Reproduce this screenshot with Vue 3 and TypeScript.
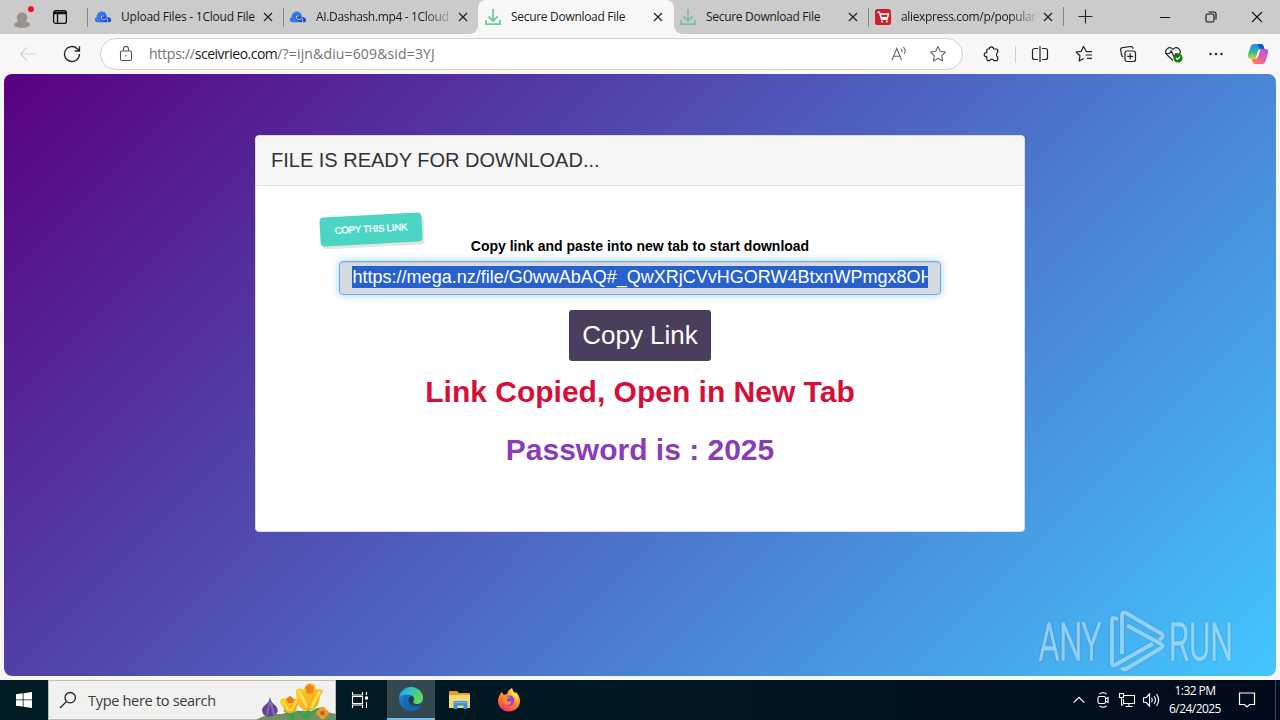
<script setup lang="ts">
interface Tab {
  title: string
  icon: 'cloud' | 'download' | 'cart'
  active?: boolean
  faded?: boolean
  separator?: boolean
  fit: string
}

const tabs: Tab[] = [
  { title: 'Upload Files - 1Cloud File', icon: 'cloud', separator: true, fit: 'fit-a' },
  { title: 'AI.Dashash.mp4 - 1Cloud', icon: 'cloud', faded: true, separator: true, fit: 'fit-b' },
  { title: 'Secure Download File', icon: 'download', active: true, fit: 'fit-c' },
  { title: 'Secure Download File', icon: 'download', fit: 'fit-c' },
  { title: 'aliexpress.com/p/popular', icon: 'cart', faded: true, separator: true, fit: 'fit-d' },
]

const link = 'https://mega.nz/file/G0wwAbAQ#_QwXRjCVvHGORW4BtxnWPmgx8OH'
</script>

<template>
  <div class="screen">
    <header class="titlebar">
      <div class="profile">
        <svg width="24" height="28" viewBox="0 0 24 28">
          <circle cx="12" cy="14" r="11" fill="#cecbc9" />
          <circle cx="12" cy="13.500" r="5.3" fill="#97928f" />
          <ellipse cx="12" cy="20.500" rx="8" ry="3.600" fill="#97928f" />
          <circle cx="21" cy="5.2" r="3.6" fill="#e0142c" stroke="#e4d4d4" stroke-width="1" />
        </svg>
      </div>
      <div class="workspaces">
        <svg width="16" height="16" viewBox="0 0 16 16" fill="none" stroke="#111" stroke-width="1.3">
          <rect x="1.6" y="1.6" width="12.8" height="12.8" rx="2.2" />
          <path d="M2 3.2h12M2 4.5h12M5.5 5v9" />
        </svg>
      </div>
      <div v-for="(tab, i) in tabs" :key="i" class="tab" :class="{ active: tab.active, separated: tab.separator }">
        <svg v-if="tab.icon === 'cloud'" class="favicon cloud" viewBox="0 0 18 18">
          <path d="M2.400 14C.2 12.700.4 9.800 2.600 9.300 2.500 5.800 5 3.300 8.200 3.500c3.300.2 5 3 4.500 5.500l-1 5z" fill="#3478ee" />
          <path d="M2.400 14.200C5 14.500 9 14.500 11.500 14.200 8.500 13.600 6 11.500 6.300 8.800 6.600 6.500 9.600 6 10.300 8l2.500 1c2.200-.4 4.400 1.200 4.400 3.300 0 1.300-.7 2-1.900 2z" fill="#1c50c5" />
          <path d="M9.800 8.200C8.300 7 6.500 8.500 7.300 10.200c.9 1.900 4 1.800 5 0" fill="none" stroke="#d3dcf0" stroke-width="1" />
          <path d="M12.700 9.500c1.200 1.500 1.300 3.300.7 4.800" fill="none" stroke="#cbd3e6" stroke-width=".8" />
        </svg>
        <svg v-else-if="tab.icon === 'download'" class="favicon" viewBox="0 0 18 18" fill="none" stroke="#74c79c" stroke-width="1.800">
          <path d="M9 1v12M4.500 8.500 9 13l4.500-4.500M2 12v4.200h14V12" />
        </svg>
        <svg v-else class="favicon" viewBox="0 0 18 18">
          <rect x="1" y="1" width="16" height="16" rx="2.500" fill="#cd1f2c" />
          <path d="M3.500 4.200h2l2 7h6.300M6 6h8.600l-1.200 3.700H7.100" fill="none" stroke="#fff" stroke-width="1.400" />
          <circle cx="8" cy="13.500" r="1" fill="#fff" /><circle cx="12.800" cy="13.500" r="1" fill="#fff" />
        </svg>
        <span class="tab-title" :class="[tab.fit, { faded: tab.faded }]">{{ tab.title }}</span>
        <svg class="close" width="10" height="10" viewBox="0 0 10 10" stroke="#222" stroke-width="1.200"><path d="m1 1 8 8M9 1 1 9" /></svg>
      </div>
      <div class="new-tab">
        <svg width="15" height="15" viewBox="0 0 15 15" stroke="#222" stroke-width="1.100"><path d="M.5 7.500h14M7.500.5v14" /></svg>
      </div>
      <div class="window-controls">
        <div><svg width="12" height="12" viewBox="0 0 12 12" stroke="#111"><path d="M1 6.500h10" /></svg></div>
        <div>
          <svg width="12" height="12" viewBox="0 0 12 12" fill="none" stroke="#111" stroke-width="1.100">
            <rect x="1" y="3" width="8" height="8" rx="1.500" /><path d="M3.500 1H9a2 2 0 0 1 2 2v5.500" />
          </svg>
        </div>
        <div><svg width="12" height="12" viewBox="0 0 12 12" stroke="#111" stroke-width="1.100"><path d="m1 1 10 10M11 1 1 11" /></svg></div>
      </div>
    </header>

    <nav class="toolbar">
      <div class="tool"><svg width="18" height="16" viewBox="0 0 18 16" fill="none" stroke="#cfcfcf" stroke-width="1.100"><path d="M17 8H1.500M8 1.500 1.500 8 8 14.500" /></svg></div>
      <div class="tool"><svg width="18" height="18" viewBox="0 0 18 18" fill="none" stroke="#222" stroke-width="1.300"><path d="M16.500 9a7.500 7.500 0 1 1-2.200-5.300L16.300 5.700M16.500 1.200V6h-4.800" /></svg></div>
      <div class="address">
        <svg class="lock" width="14" height="16" viewBox="0 0 14 16" fill="none" stroke="#555" stroke-width="1.100">
          <rect x="1.500" y="5" width="11" height="9.500" rx="1.500" /><path d="M4.500 5V2.900a2.500 2.500 0 0 1 5 0V5" /><circle cx="7" cy="9.700" r=".8" fill="#555" stroke="none" />
        </svg>
        <span class="url"><span class="scheme">https://</span><b>sceivrieo.com</b>/?=ijn&amp;diu=609&amp;sid=3YJ</span>
        <svg class="read-aloud" width="18" height="18" viewBox="0 0 18 18" fill="none" stroke="#666" stroke-width="1.100">
          <path d="m2 15 4.800-11.500L11.500 15M3.600 11.200h6.300M11 4c.9.800 1.200 2 .9 3.300M13.300 2.200c2 1.700 2.300 4.300 1 6.500" />
        </svg>
        <svg class="star" width="18" height="18" viewBox="0 0 18 18" fill="none" stroke="#666" stroke-width="1.100" stroke-linejoin="round">
          <path d="m9 1.500 2.300 4.800 5.200.7-3.800 3.700.9 5.200L9 13.400l-4.600 2.500.9-5.200L1.500 7l5.200-.7z" />
        </svg>
      </div>
      <div class="tool extensions"><svg width="18" height="18" viewBox="0 0 18 18" fill="none" stroke="#222" stroke-width="1.200" stroke-linejoin="round"><path d="M6.200 4a2.200 2.200 0 0 1 4.400 0h2.900a1.200 1.200 0 0 1 1.200 1.200v2.600a2.200 2.200 0 0 0 0 4v2.600a1.200 1.200 0 0 1-1.200 1.200h-2.700a2.200 2.200 0 0 0-4.200 0H5a1.200 1.200 0 0 1-1.200-1.200v-2.700a2.100 2.100 0 1 1 0-4.100V5.200A1.200 1.200 0 0 1 5 4z" /></svg></div>
      <i class="divider"></i>
      <div class="tool"><svg width="18" height="18" viewBox="0 0 18 18" fill="none" stroke="#222" stroke-width="1.200"><path d="M7 3.500H3.500a2 2 0 0 0-2 2v7a2 2 0 0 0 2 2H7M11 3.500h3.500a2 2 0 0 1 2 2v7a2 2 0 0 1-2 2H11M9 1v16" /></svg></div>
      <div class="tool"><svg width="18" height="18" viewBox="0 0 18 18" fill="none" stroke="#222" stroke-width="1.200" stroke-linejoin="round"><path d="M17 6.700h-5.500L8.500 1.500 6.300 6.300l-5.200.7L5 10.700l-.9 5.200 4.600-2.400M10.500 10H17M12 13.300h5" /></svg></div>
      <div class="tool"><svg width="18" height="18" viewBox="0 0 18 18" fill="none" stroke="#222" stroke-width="1.200"><rect x="6" y="6" width="10.500" height="10.500" rx="2" /><path d="M11.200 8.300v6M8.200 11.300h6M14 3.700A2 2 0 0 0 12 1.500L3.500 2.600A2 2 0 0 0 1.600 5l1 5.200a2 2 0 0 0 1.700 1.600" /></svg></div>
      <div class="tool health"><svg width="20" height="18" viewBox="0 0 20 18" fill="none" stroke="#222" stroke-width="1.200"><path d="M9 15.700 2.800 9.500C-.5 5.500 5 .3 9 4.300c4-4 9.500 1.200 6.200 5.200M1 8.500h4.500L7.200 6l3 6 1.700-3.300h1.600" /><circle cx="14" cy="13" r="4.600" fill="#157c18" stroke="none" /><path d="m11.900 13 1.500 1.500 2.800-2.800" stroke="#fff" /></svg></div>
      <div class="tool"><svg width="16" height="4" viewBox="0 0 16 4" fill="#222"><circle cx="2.500" cy="2" r="1.200" /><circle cx="8" cy="2" r="1.200" /><circle cx="13.500" cy="2" r="1.200" /></svg></div>
      <div class="tool copilot">
        <svg width="22" height="22" viewBox="0 0 22 22">
          <defs>
            <linearGradient id="cp1" x1="0" y1="0" x2="0" y2="1"><stop offset="0" stop-color="#1d8df0" /><stop offset=".55" stop-color="#37b89a" /><stop offset="1" stop-color="#e6d32f" /></linearGradient>
            <linearGradient id="cp2" x1="1" y1="0" x2="0" y2="1"><stop offset="0" stop-color="#a65bed" /><stop offset=".5" stop-color="#e85aa4" /><stop offset="1" stop-color="#ff8b50" /></linearGradient>
          </defs>
          <path d="M7 1h7c1.500 0 2.200.8 2.700 2.500L17.400 6H14c-1.600 0-2.500.8-3 2.400L9.300 14c-.5 1.500-1 2-2.500 2H4c-2.800 0-3.700-2-3-4.500L3.500 4C4.200 2 5 1 7 1z" fill="url(#cp1)" />
          <path d="M10 1h4c1.500 0 2.200.8 2.700 2.500L17.400 6H14c-1.300 0-2-1-2.300-2C11.300 2.400 11 1.500 10 1z" fill="#1558cc" />
          <path d="M15 21H8c-1.500 0-2.200-.8-2.700-2.500L4.600 16H8c1.600 0 2.500-.8 3-2.400L12.700 8c.5-1.500 1-2 2.500-2H18c2.800 0 3.700 2 3 4.500L18.500 18c-.7 2-1.500 3-3.500 3z" fill="url(#cp2)" />
          <path d="M11.200 7.500h1.700l-2 6.500H9.200z" fill="#f7f7f7" />
        </svg>
      </div>
    </nav>

    <main class="page">
      <section class="card">
        <h1>FILE IS READY FOR DOWNLOAD...</h1>
        <div class="card-body">
          <span class="badge">COPY THIS LINK</span>
          <label>Copy link and paste into new tab to start download</label>
          <div class="link-field"><span>{{ link }}</span></div>
          <button type="button">Copy Link</button>
          <h2 class="copied">Link Copied, Open in New Tab</h2>
          <h2 class="password">Password is : 2025</h2>
        </div>
      </section>
      <svg class="watermark" width="208" height="66" viewBox="0 0 208 66">
        <g fill="#d5efff" stroke="#d5efff" stroke-width="1.500">
          <text x="7" y="51.500" textLength="62" lengthAdjust="spacingAndGlyphs">ANY</text>
          <text x="137" y="51.500" textLength="64" lengthAdjust="spacingAndGlyphs">RUN</text>
        </g>
        <g fill="none" stroke="#d5efff" stroke-width="3.800" stroke-linejoin="round" stroke-linecap="butt">
          <path d="M86 11.500 83 10.300q-3-1.200-3 2V55q0 3.500 3 2l38-21.500" />
          <path d="M90 46V7.500q0-4.500 4-2.500l35 20.500q3 2 1 4.500l-3 2" />
          <path d="M95 17.500 129 36q3 2 0 4L94 61q-3 1.300-4-1.500" />
        </g>
      </svg>
    </main>

    <footer class="taskbar">
      <div class="start"><svg width="16" height="16" viewBox="0 0 16 16" fill="#fff"><path d="M0 2.300 6.700 1.300v6.200H0zM7.500 1.200 16 0v7.500H7.500zM0 8.300h6.700v6.300L0 13.700zM7.500 8.300H16V16l-8.500-1.300z" /></svg></div>
      <div class="search">
        <svg width="18" height="18" viewBox="0 0 18 18" fill="none" stroke="#222" stroke-width="1.300"><circle cx="11.200" cy="6.700" r="5.200" /><path d="M7.500 10.500 1 17" /></svg>
        <span>Type here to search</span>
        <svg class="flowers" width="80" height="39" viewBox="0 0 80 39">
          <defs>
            <linearGradient id="petal" x1="0" y1="0" x2="1" y2="1"><stop offset="0" stop-color="#ffd12e" /><stop offset="1" stop-color="#f3a112" /></linearGradient>
          </defs>
          <path d="M0 39q10-7 26-6 12-4 27-3 16 0 27 3v6z" fill="#6d9160" />
          <path d="M37 39q1-7-1-13m1 12q-6-8-9-9M49 38q5-10 4-16m-3 15q-7-7-9-6m9 6q7-8 14-9" fill="none" stroke="#38a24b" stroke-width="2.800" />
          <path d="M14 16q1 6 6 9 4 5-1 9-6 3-11 0-4-5 0-9 5-3 6-9z" fill="#65449b" />
          <path d="m14 20-3 14m4-12 3 12" stroke="#8d6db5" stroke-width="1.500" fill="none" />
          <path d="M24 19q4-3 6-1l4-3 4 3q4-1 5 2 0 4-2 6-1 6-6 6-6 1-8-6-3-3-3-7z" fill="url(#petal)" />
          <path d="m27 20 6 10M41 19l-6 11" stroke="#ffda4e" stroke-width="2.400" />
          <path d="m30 18 4-3 4 3-1 4h-5z" fill="#e77a1c" />
          <path d="M40 9q4-3 7 0l4-6q5-2 8 1l1 5q4-2 7 1l-3 5q-1 12-8 14-8 2-12-3-4-5-4-17z" fill="url(#petal)" />
          <path d="m43 10 8 16M64 10l-9 17" stroke="#ffdf54" stroke-width="3" />
          <path d="m49 6 4-3 5 3-1 6-6 1z" fill="#ed8419" />
          <g fill="#f59a2a"><circle cx="63.500" cy="32" r="3.200" /><circle cx="69.500" cy="32" r="3.200" /><circle cx="66.500" cy="29" r="3.200" /><circle cx="66.500" cy="35" r="3.200" /></g><circle cx="66.500" cy="32" r="2.300" fill="#b95b20" />
        </svg>
      </div>
      <div class="task view"><svg width="18" height="18" viewBox="0 0 18 18" fill="none" stroke="#fff" stroke-width="1.100"><path d="M1.500 1v3h10V1M1.500 17v-3h10v3M15.500 1v3M15.500 11v6" /><rect x="1.500" y="5.500" width="10" height="7" /><rect x="14" y="5.500" width="3" height="3" fill="#fff" stroke="none" /></svg></div>
      <div class="task running">
        <svg width="26" height="26" viewBox="0 0 26 26">
          <defs>
            <linearGradient id="eg1" x1="0" y1="0" x2="1" y2=".4"><stop offset="0" stop-color="#2699d8" /><stop offset=".5" stop-color="#35c1c0" /><stop offset="1" stop-color="#65d653" /></linearGradient>
            <linearGradient id="eg2" x1="0" y1="0" x2="1" y2="1"><stop offset="0" stop-color="#198edb" /><stop offset="1" stop-color="#124c98" /></linearGradient>
          </defs>
          <circle cx="13" cy="13" r="12" fill="url(#eg2)" />
          <path d="M1 12C2 5 7 1 13 1c7 0 12 5 12 11 0 4-3 6-6.500 6-3 0-4-1.300-3.300-2.500 2.300-4-1.200-7.200-5.400-6.600C5.500 8.500 2 10 1 12z" fill="url(#eg1)" />
          <path d="M10 9c-4 5-1 12 7 12 3 0 4.500-.7 6-1.800C20 25 14 26 10 24 4 20 4 11 10 9z" fill="#1767b4" />
          <path d="M12.500 10.200c-3.500 2.500-2.500 8 2.500 9.300 3.600 1 6.800-.5 8.800-2-2.500 1.200-8.600 1-8.600-1.500 0-1 1.200-1.600.8-3.600-.3-1.500-1.600-2.800-3.500-2.200z" fill="#293e48" />
        </svg>
      </div>
      <div class="task">
        <svg width="24" height="22" viewBox="0 0 24 22"><path d="M1 3q0-1 1-1h7l2 2h10q1 0 1 1v3H1z" fill="#e2a02d" /><path d="M1 6h21v13H1z" fill="#f8d775" /><path d="M5.500 20v-7q0-1 1-1h12q1 0 1 1v7h-4v-3.500h-6V20z" fill="#3b93d4" /><path d="M6 13.500h13" stroke="#75bce8" /></svg>
      </div>
      <div class="task">
        <svg width="24" height="24" viewBox="0 0 24 24">
          <defs><linearGradient id="ff" x1=".8" y1="0" x2=".3" y2="1"><stop offset="0" stop-color="#ffe64b" /><stop offset=".45" stop-color="#ff9826" /><stop offset="1" stop-color="#f52d64" /></linearGradient></defs>
          <path d="M4.500 4 7 7l3-1q1-4 5-6 0 3 3 5l1-1q4 4 4 9c0 6-5 10.500-11 10.500S1 19 1 13c0-3 1-5 2-6.500z" fill="url(#ff)" />
          <circle cx="12" cy="12.500" r="5.300" fill="#8d45de" />
          <path d="M5 9q3-2 6-.5l2 1.500q-3 0-3.500 2.200Q11 15 15 13q-2 5-6.500 3.500Q4.500 14.500 5 9z" fill="#ff8a2a" />
          <path d="M15 0q0 3 3 5 4 4 2 10 0-5-4-7-3-3-1-8z" fill="#ffe04a" />
        </svg>
      </div>
      <div class="tray">
        <svg class="chevron" width="12" height="8" viewBox="0 0 12 8" fill="none" stroke="#fff" stroke-width="1.200"><path d="m.7 6.700 5.300-5.300 5.300 5.300" /></svg>
        <svg class="meet" width="14" height="18" viewBox="0 0 14 18" fill="none" stroke="#fff" stroke-width="1.100"><rect x="2" y="5.500" width="7.500" height="7" rx="1.500" /><path d="M9.500 8 12 6.500v5L9.500 10M3.500 3q3.500-2.500 7 0M3.500 15q3.500 2.500 7 0" /></svg>
        <svg class="network" width="18" height="16" viewBox="0 0 18 16" fill="none" stroke="#fff" stroke-width="1.100"><path d="M6 3.500h10.500v8H5.500V7M11 11.500v3M7.500 14.500h7" /><path d="M1.500 1.500h4v4h-4zM3.500 5.500v7.500h2" /></svg>
        <svg class="volume" width="18" height="16" viewBox="0 0 18 16" fill="none" stroke="#fff" stroke-width="1.100"><path d="M1.500 5.700H4L7.500 2v12L4 10.300H1.500zM9.500 5.700q1.500 2.300 0 4.600M12 4q3 4 0 8M14.500 2.200q4.300 5.800 0 11.600" /></svg>
        <div class="clock"><span class="time">1:32 PM</span><span class="date">6/24/2025</span></div>
        <svg class="notify" width="18" height="18" viewBox="0 0 18 18" fill="none" stroke="#fff" stroke-width="1.200"><path d="M1.500 2h15v11.500h-5L9 16l-2.500-2.500h-5z" /></svg>
        <i class="peek"></i>
      </div>
    </footer>
  </div>
</template>

<style>
body { margin: 0; overflow: hidden; }
</style>

<style scoped>
* { box-sizing: border-box; }
svg { display: block; flex: none; }
.screen { width: 1280px; height: 720px; display: flex; flex-direction: column; background: #f7f7f7; font-family: "Open Sans", "Noto Sans", sans-serif; overflow: hidden; }
.titlebar { height: 34px; display: flex; background: #cbcbcb; flex: none; }
.profile { width: 44px; display: flex; justify-content: center; padding-top: 4px; }
.workspaces { width: 44px; display: flex; align-items: center; padding-left: 8px; }
.tab { width: 195px; display: flex; align-items: center; position: relative; padding-left: 6px; color: #1b1b1b; font-size: 12px; }
.tab.separated::before { content: ""; position: absolute; left: 0; top: 8px; width: 1px; height: 19px; background: #858585; }
.workspaces + .tab.separated::before { left: -1px; }
.tab.active { background: #f7f7f7; border-radius: 8px 8px 0 0; box-shadow: 1px 0 0 #f7f7f7; }
.tab.active::before, .tab.active::after { content: ""; position: absolute; bottom: 0; width: 8px; height: 8px; }
.tab.active::before { left: -8px; background: radial-gradient(circle at 0 0, transparent 7.5px, #f7f7f7 8px); }
.tab.active::after { right: -9px; background: radial-gradient(circle at 100% 0, transparent 7.5px, #f7f7f7 8px); }
.favicon { width: 18px; height: 18px; }
.tab-title { width: 137px; margin-left: 9px; overflow: hidden; white-space: nowrap; line-height: 18px; }
.fit-a { letter-spacing: -0.23px; }
.fit-b { letter-spacing: -0.34px; }
.fit-c { letter-spacing: -0.3px; }
.fit-d { letter-spacing: -0.36px; }
.faded { mask-image: linear-gradient(90deg, #000 108px, rgba(0, 0, 0, 0.15) 135px); }
.close { margin-left: 5px; }
.new-tab { width: 44px; display: grid; place-items: center; border-left: 1px solid #858585; height: 19px; margin-top: 7px; }
.window-controls { margin-left: auto; display: flex; }
.window-controls div { width: 46px; display: grid; place-items: center; }
.toolbar { height: 40px; display: flex; align-items: center; padding-left: 6px; flex: none; }
.tool { width: 44px; height: 40px; display: grid; place-items: center; flex: none; }
.address { width: 863px; height: 32px; margin-left: 6px; border: 1px solid #d1d1d1; border-radius: 16px; background: #fff; display: flex; align-items: center; flex: none; }
.lock { margin-left: 18px; }
.url { margin-left: 16px; color: #737373; font-size: 14px; line-height: 20px; white-space: nowrap; letter-spacing: 0.15px; }
.url .scheme { letter-spacing: -0.25px; }
.url b { font-weight: 400; color: #171717; letter-spacing: -0.5px; }
.read-aloud { margin-left: auto; }
.star { margin: 0 15px 0 21px; }
.extensions { margin-left: 6px; padding-left: 1px; }
.divider { width: 1px; height: 17px; background: #d0d0d0; margin: 0 2px; flex: none; }
.health { padding-left: 3px; }
.copilot { margin-left: -2px; }
.page { height: 602px; margin: 0 4px 4px; border-radius: 8px; background: linear-gradient(135deg, #590080, #43c6ff); position: relative; padding-top: 61px; font-family: "Liberation Sans", Arial, sans-serif; flex: none; }
.card { width: 770px; height: 397px; margin: 0 auto; border: 1px solid #ddd; border-radius: 4px; background: #fff; overflow: hidden; }
h1 { margin: 0; height: 50px; padding: 0 15px; border-bottom: 1px solid #ddd; background: #f5f5f5; font-size: 20px; font-weight: 400; line-height: 49px; color: #333; }
.card-body { position: relative; display: flex; flex-direction: column; align-items: center; padding-top: 50px; }
.badge { position: absolute; left: 64px; top: 29px; width: 102px; height: 29px; border-radius: 4px; background: #4bd5c2; box-shadow: 2px 3px 0 #e2e5e5; transform: rotate(-3deg); color: #fff; font-size: 9.6px; letter-spacing: -0.2px; -webkit-text-stroke: 0.3px #fff; line-height: 27px; text-align: center; white-space: nowrap; }
label { font-size: 14px; line-height: 20px; font-weight: 700; color: #000; }
.link-field { width: 602px; height: 34px; margin-top: 5px; padding: 4px 12px; border: 1px solid #66afe9; border-radius: 4px; background: #d5dae3; box-shadow: inset 0 1px 1px rgba(0,0,0,.08), 0 0 8px rgba(102,175,233,.6); }
.link-field span { display: block; overflow: hidden; white-space: nowrap; height: 22px; background: #2861cc; color: #fff; font-size: 18px; line-height: 23px; text-indent: 0.6px; }
button { width: 142px; height: 51px; margin: 15px 0 0; padding: 0; border: 0; border-radius: 3px; background: #493f5c; color: #fff; font: 26px/51px "Liberation Sans", Arial, sans-serif; }
h2 { margin: 0; font-size: 30px; line-height: 34px; }
.copied { margin-top: 14px; color: #d50f38; }
.password { margin-top: 24px; color: #8b3db9; }
.watermark { position: absolute; left: 1028px; top: 534px; opacity: .52; filter: drop-shadow(0 0 1px #52738f); }
.watermark text { font: 300 51px Roboto, sans-serif; }
.taskbar { height: 40px; display: flex; align-items: stretch; background: linear-gradient(90deg, #011c22, #021722 55%, #020b1b); flex: none; }
.start, .task { width: 48px; display: grid; place-items: center; }
.search { width: 288px; background: #f1f1f0; border: 1px solid #bcbcbc; border-top-color: #c6c0b2; display: flex; align-items: center; padding-left: 10px; color: #3b3b3b; position: relative; }
.search span { margin-left: 11px; font-size: 14.5px; letter-spacing: -0.3px; white-space: nowrap; }
.flowers { position: absolute; right: -1px; bottom: -1px; }
.task { width: 49px; }
.task.view { width: 51px; padding-right: 3px; }
.task.running { width: 48px; background: #33484f; border-bottom: 2px solid #76b9ed; }
.tray { margin-left: auto; display: flex; align-items: center; color: #fff; }
.meet { margin-left: 11px; }
.network { margin-left: 8px; }
.volume { margin-left: 6px; }
.clock { width: 70px; display: flex; flex-direction: column; align-items: center; font-size: 12px; line-height: 18px; white-space: nowrap; letter-spacing: -0.55px; }
.notify { margin: 0 19px 0 8px; }
.peek { width: 1px; height: 40px; background: #3a4654; margin-right: 4px; }
</style>
